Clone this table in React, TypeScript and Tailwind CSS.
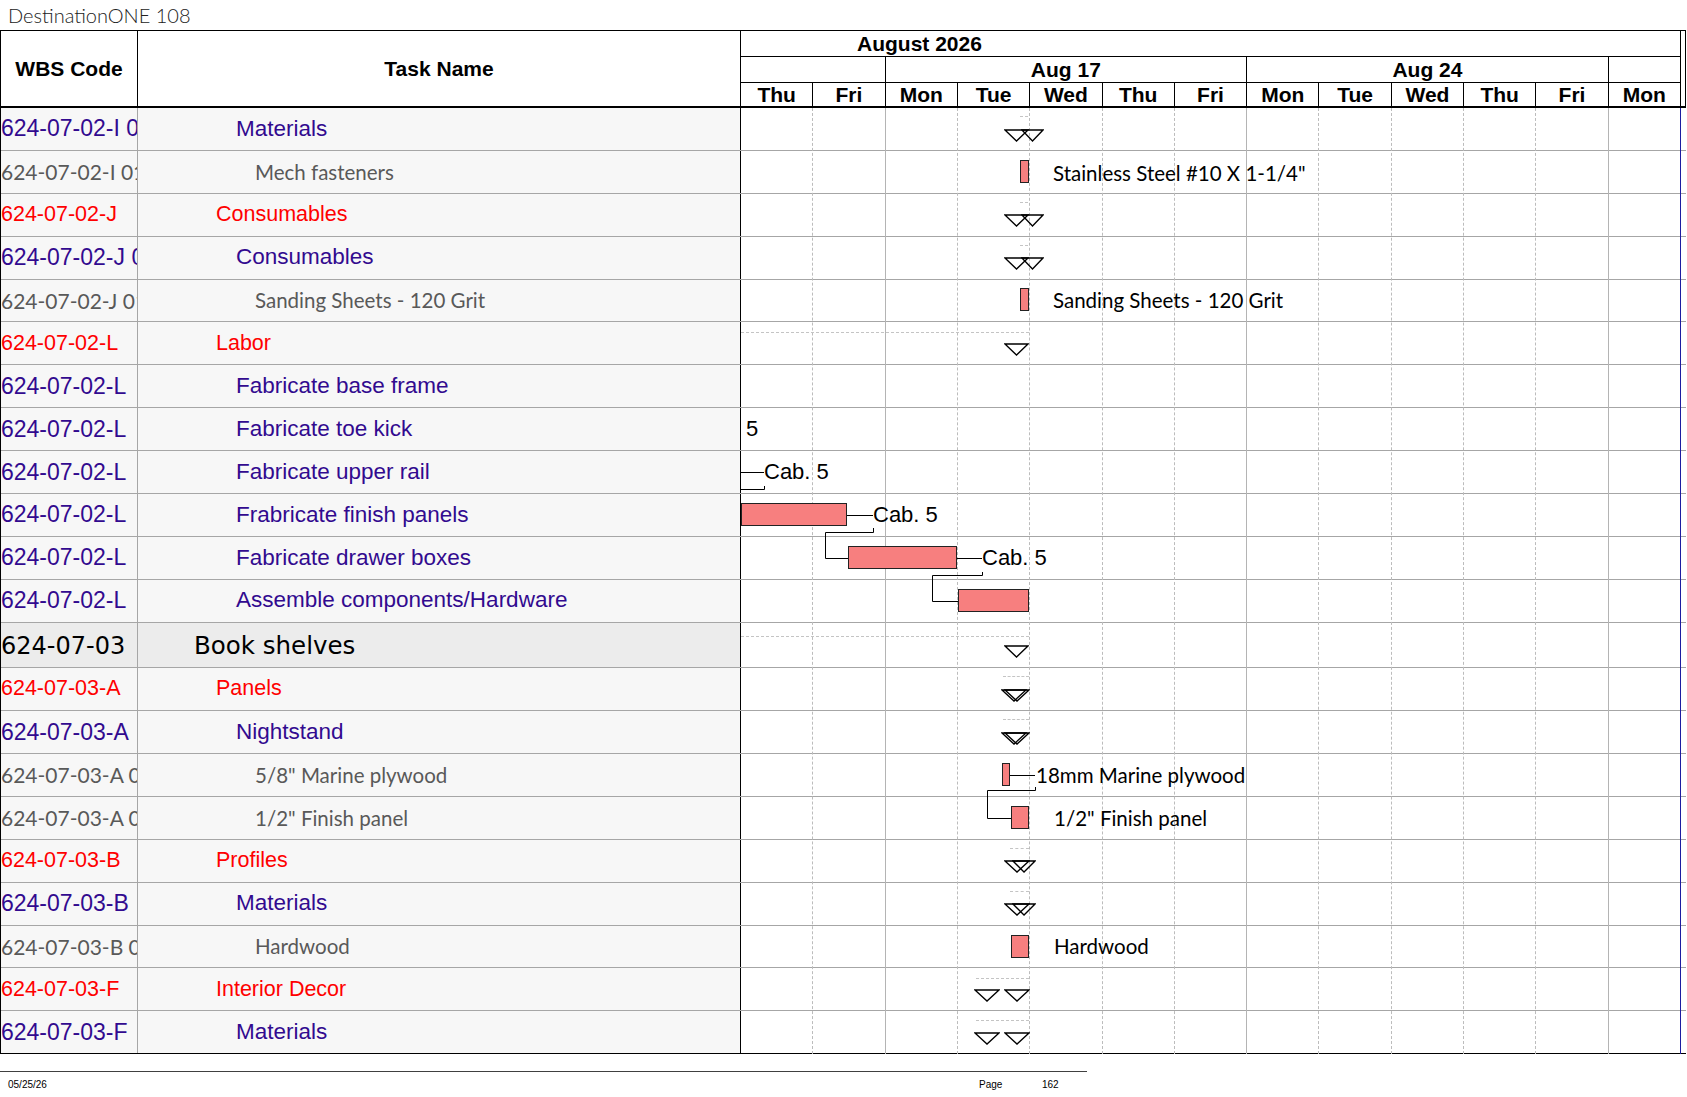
import React from 'react';

type Kind = 'red' | 'purple' | 'gray' | 'top';

interface TaskRow {
  wbs: string;
  name: string;
  kind: Kind;
}

const rows: TaskRow[] = [
  { wbs: '624-07-02-I 01', name: 'Materials', kind: 'purple' },
  { wbs: '624-07-02-I 01 01', name: 'Mech fasteners', kind: 'gray' },
  { wbs: '624-07-02-J', name: 'Consumables', kind: 'red' },
  { wbs: '624-07-02-J 01', name: 'Consumables', kind: 'purple' },
  { wbs: '624-07-02-J 01 01', name: 'Sanding Sheets - 120 Grit', kind: 'gray' },
  { wbs: '624-07-02-L', name: 'Labor', kind: 'red' },
  { wbs: '624-07-02-L', name: 'Fabricate base frame', kind: 'purple' },
  { wbs: '624-07-02-L', name: 'Fabricate toe kick', kind: 'purple' },
  { wbs: '624-07-02-L', name: 'Fabricate upper rail', kind: 'purple' },
  { wbs: '624-07-02-L', name: 'Frabricate finish panels', kind: 'purple' },
  { wbs: '624-07-02-L', name: 'Fabricate drawer boxes', kind: 'purple' },
  { wbs: '624-07-02-L', name: 'Assemble components/Hardware', kind: 'purple' },
  { wbs: '624-07-03', name: 'Book shelves', kind: 'top' },
  { wbs: '624-07-03-A', name: 'Panels', kind: 'red' },
  { wbs: '624-07-03-A', name: 'Nightstand', kind: 'purple' },
  { wbs: '624-07-03-A 01 01', name: '5/8" Marine plywood', kind: 'gray' },
  { wbs: '624-07-03-A 01 02', name: '1/2" Finish panel', kind: 'gray' },
  { wbs: '624-07-03-B', name: 'Profiles', kind: 'red' },
  { wbs: '624-07-03-B', name: 'Materials', kind: 'purple' },
  { wbs: '624-07-03-B 01 01', name: 'Hardwood', kind: 'gray' },
  { wbs: '624-07-03-F', name: 'Interior Decor', kind: 'red' },
  { wbs: '624-07-03-F', name: 'Materials', kind: 'purple' },
];

const wbsStyle: Record<Kind, string> = {
  red: "font-['Liberation_Sans',Arial,sans-serif] text-[21.5px] text-[#ff0000]",
  purple: "font-['Liberation_Sans',Arial,sans-serif] text-[23px] text-[#320a8f]",
  gray: "font-['Lato','Liberation_Sans',sans-serif] text-[21px] text-[#595959]",
  top: "font-['DejaVu_Sans',Verdana,sans-serif] text-[24px] text-black",
};

const nameStyle: Record<Kind, string> = {
  red: "pl-[78px] font-['Liberation_Sans',Arial,sans-serif] text-[21.5px] text-[#ff0000]",
  purple: "pl-[98px] font-['Liberation_Sans',Arial,sans-serif] text-[22.5px] text-[#320a8f]",
  gray: "pl-[117px] font-['Lato','Liberation_Sans',sans-serif] text-[20.5px] text-[#595959]",
  top: "pl-[56px] font-['DejaVu_Sans',Verdana,sans-serif] text-[24.5px] text-black",
};

const days = ['Thu', 'Fri', 'Mon', 'Tue', 'Wed', 'Thu', 'Fri', 'Mon', 'Tue', 'Wed', 'Thu', 'Fri', 'Mon'];

// gantt coordinates: x from the first day column, y from the top of the first row
const bars = [
  { x: 279, y: 52, w: 9 },
  { x: 279, y: 180, w: 9 },
  { x: 0, y: 395, w: 106 },
  { x: 107, y: 438, w: 109 },
  { x: 217, y: 481, w: 71 },
  { x: 261, y: 655, w: 8 },
  { x: 270, y: 698, w: 18 },
  { x: 270, y: 827, w: 18 },
];

const tris = [
  { x: 264, y: 22, w: 23 }, { x: 281, y: 22, w: 21 },
  { x: 264, y: 107, w: 23 }, { x: 281, y: 107, w: 21 },
  { x: 264, y: 150, w: 23 }, { x: 281, y: 150, w: 21 },
  { x: 264, y: 236, w: 23 },
  { x: 264, y: 538, w: 23 },
  { x: 261, y: 582, w: 24 }, { x: 264, y: 582, w: 24 },
  { x: 261, y: 625, w: 24 }, { x: 264, y: 625, w: 24 },
  { x: 264, y: 753, w: 24 }, { x: 272, y: 753, w: 22 },
  { x: 264, y: 796, w: 24 }, { x: 272, y: 796, w: 22 },
  { x: 234, y: 882, w: 24 }, { x: 264, y: 882, w: 24 },
  { x: 234, y: 925, w: 24 }, { x: 264, y: 925, w: 24 },
];

const dashes = [
  { x: 279, y: 8, w: 8 },
  { x: 279, y: 94, w: 8 },
  { x: 279, y: 137, w: 8 },
  { x: 0, y: 224, w: 288 },
  { x: 0, y: 528, w: 288 },
  { x: 262, y: 568, w: 26 },
  { x: 262, y: 611, w: 26 },
  { x: 269, y: 740, w: 19 },
  { x: 269, y: 783, w: 19 },
  { x: 235, y: 870, w: 53 },
  { x: 235, y: 912, w: 53 },
];

const labels = [
  { x: 312, y: 65, text: 'Stainless Steel #10 X 1-1/4"', calibri: true },
  { x: 312, y: 192, text: 'Sanding Sheets - 120 Grit', calibri: true },
  { x: 5, y: 321, text: '5', calibri: false },
  { x: 23, y: 364, text: 'Cab. 5', calibri: false },
  { x: 132, y: 407, text: 'Cab. 5', calibri: false },
  { x: 241, y: 450, text: 'Cab. 5', calibri: false },
  { x: 295, y: 667, text: '18mm Marine plywood', calibri: true },
  { x: 313, y: 710, text: '1/2" Finish panel', calibri: true },
  { x: 313, y: 838, text: 'Hardwood', calibri: true },
];

const links = [
  'M0 364.5H23',
  'M0 381.5H23.5V378',
  'M106 407.5H132',
  'M132.5 420V424.5H84.5V450.5H107',
  'M216 450.5H241',
  'M241.5 464V467.5H191.5V493.5H217',
  'M269 667.5H294',
  'M294.5 679V682.5H246.5V710.5H270',
];

function Tri({ x, y, w }: { x: number; y: number; w: number }) {
  return (
    <svg className="absolute" style={{ left: x - 1, top: y - 1 }} width={w + 2} height={13}>
      <polygon points={`1,1 ${w + 1},1 ${w / 2 + 1},12`} fill="none" stroke="#000" strokeWidth={1.3} />
    </svg>
  );
}

function GanttHeader() {
  return (
    <div className="w-[940px] flex flex-col font-['Liberation_Sans',Arial,sans-serif] font-bold text-[21px] text-black">
      <div className="h-[26px] border-b border-r border-black pl-[116px] flex items-center leading-none">
        August 2026
      </div>
      <div className="h-[26px] border-b border-black grid grid-cols-[repeat(13,minmax(0,1fr))] leading-none">
        <div className="col-span-2 border-r border-black" />
        <div className="col-span-5 border-r border-black flex items-center justify-center">Aug 17</div>
        <div className="col-span-5 border-r border-black flex items-center justify-center">Aug 24</div>
        <div className="col-span-1 border-r border-black" />
      </div>
      <div className="h-[23px] grid grid-cols-[repeat(13,minmax(0,1fr))] leading-none">
        {days.map((d, i) => (
          <div key={i} className="border-r border-black flex items-center justify-center">
            {d}
          </div>
        ))}
      </div>
    </div>
  );
}

function GridLines() {
  return (
    <div className="absolute left-[740px] top-0 bottom-0 w-[940px] grid grid-cols-[repeat(13,minmax(0,1fr))]">
      {days.map((_, i) => {
        const cls =
          i === 12
            ? 'border-r border-solid border-[#1c1ca0]'
            : i === 1 || i === 6 || i === 11
              ? 'border-r border-solid border-[#b4b4b4]'
              : 'border-r border-dashed border-[#bcbcbc]';
        return <div key={i} className={cls} />;
      })}
    </div>
  );
}

function GanttItems() {
  return (
    <div className="absolute left-[740px] top-0 w-[945px] h-[946px] pointer-events-none">
      {dashes.map((d, i) => (
        <div
          key={i}
          className="absolute h-0 border-t border-dashed border-[#c4c4c4]"
          style={{ left: d.x, top: d.y, width: d.w }}
        />
      ))}
      {tris.map((t, i) => (
        <Tri key={i} {...t} />
      ))}
      <svg className="absolute left-0 top-0" width={945} height={946}>
        {links.map((d, i) => (
          <path key={i} d={d} fill="none" stroke="#000" strokeWidth={1} />
        ))}
      </svg>
      {bars.map((b, i) => (
        <div
          key={i}
          className="absolute h-[23px] bg-[#f77f7f] border border-[#222]"
          style={{ left: b.x, top: b.y, width: b.w }}
        />
      ))}
      {labels.map((l, i) => (
        <div
          key={i}
          className={
            'absolute -translate-y-1/2 whitespace-nowrap leading-none text-black ' +
            (l.calibri
              ? "font-['Lato','Liberation_Sans',sans-serif] text-[20.5px]"
              : "font-['Liberation_Sans',Arial,sans-serif] text-[22px]")
          }
          style={{ left: l.x, top: l.y }}
        >
          {l.text}
        </div>
      ))}
    </div>
  );
}

export default function App() {
  return (
    <div className="w-[1687px] h-[1097px] bg-white overflow-hidden">
      <div className="h-[30px] pl-[8px] flex items-center font-['Lato','Liberation_Sans',sans-serif] font-light text-[20px] text-[#222]">
        DestinationONE 108
      </div>

      <div className="w-[1686px] border-l border-black">
        <div className="flex h-[78px] border-t border-b-2 border-r border-black">
          <div className="w-[137px] border-r border-black flex items-center justify-center font-['Liberation_Sans',Arial,sans-serif] font-bold text-[21px]">
            WBS Code
          </div>
          <div className="w-[603px] border-r border-black flex items-center justify-center font-['Liberation_Sans',Arial,sans-serif] font-bold text-[21px]">
            Task Name
          </div>
          <GanttHeader />
        </div>

        <div className="relative">
          {rows.map((r, i) => {
            const last = i === rows.length - 1;
            const top = r.kind === 'top';
            return (
              <div
                key={i}
                className={
                  'flex ' +
                  (top ? 'h-[45.5px] ' : 'h-[42.9px] ') +
                  (last ? 'border-b border-black' : 'border-b border-[#a6a6a6]')
                }
              >
                <div
                  className={
                    'w-[137px] shrink-0 border-r border-[#a6a6a6] overflow-hidden whitespace-nowrap flex items-center leading-none ' +
                    (top ? 'bg-[#ececec] pt-[3px] ' : 'bg-[#f7f7f7] ') +
                    wbsStyle[r.kind]
                  }
                >
                  {r.wbs}
                </div>
                <div
                  className={
                    'w-[603px] shrink-0 border-r border-black overflow-hidden whitespace-nowrap flex items-center leading-none ' +
                    (top ? 'bg-[#ececec] pt-[3px] ' : 'bg-[#f7f7f7] ') +
                    nameStyle[r.kind]
                  }
                >
                  {r.name}
                </div>
                <div className="flex-1" />
              </div>
            );
          })}
          <GridLines />
          <GanttItems />
        </div>
      </div>

      <div className="mt-[17px] w-[1087px] border-t border-[#404040]" />
      <div className="mt-[7px] flex font-['Liberation_Sans',Arial,sans-serif] text-[10px] leading-[12px] text-black">
        <span className="w-[979px] pl-[8px]">05/25/26</span>
        <span className="w-[63px]">Page</span>
        <span>162</span>
      </div>
    </div>
  );
}
